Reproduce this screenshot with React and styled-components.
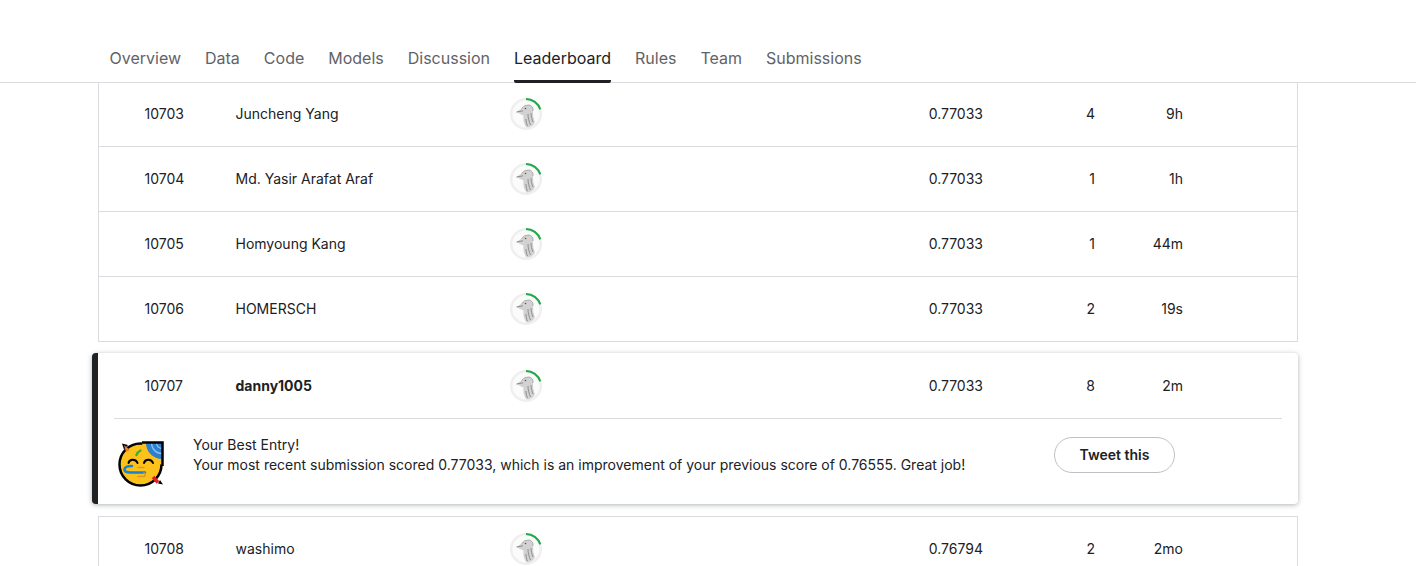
import styled, { createGlobalStyle } from "styled-components";

const rowsBefore = [
  { rank: 10703, name: "Juncheng Yang", score: "0.77033", entries: 4, last: "9h" },
  { rank: 10704, name: "Md. Yasir Arafat Araf", score: "0.77033", entries: 1, last: "1h" },
  { rank: 10705, name: "Homyoung Kang", score: "0.77033", entries: 1, last: "44m" },
  { rank: 10706, name: "HOMERSCH", score: "0.77033", entries: 2, last: "19s" },
];
const tabs = ["Overview", "Data", "Code", "Models", "Discussion", "Leaderboard", "Rules", "Team", "Submissions"];

export default function App() {
  return (
    <Page>
      <GlobalStyle />
      <TabBar>
        {tabs.map((t) => (
          <Tab key={t} $active={t === "Leaderboard"}>{t}</Tab>
        ))}
      </TabBar>
      <Board>
        <Group $first>
          {rowsBefore.map((r, i) => (
            <LeaderRow key={r.rank} row={r} first={i === 0} />
          ))}
        </Group>
        <BestCard>
          <LeaderRow row={{ rank: 10707, name: "danny1005", score: "0.77033", entries: 8, last: "2m" }} bold first={false} />
          <Divider />
          <Message>
            <PartyFace />
            <MessageText>
              Your Best Entry!
              <br />
              Your most recent submission scored 0.77033, which is an improvement of your previous score of 0.76555. Great job!
            </MessageText>
            <TweetButton>Tweet this</TweetButton>
          </Message>
        </BestCard>
        <Group>
          <LeaderRow row={{ rank: 10708, name: "washimo", score: "0.76794", entries: 2, last: "2mo" }} first={false} />
        </Group>
      </Board>
    </Page>
  );
}

function LeaderRow({ row, bold, first }) {
  return (
    <Row $first={first} $best={bold}>
      <Rank>{row.rank}</Rank>
      <Name $bold={bold}>{row.name}</Name>
      <Medal />
      <Num>{row.score}</Num>
      <Num>{row.entries}</Num>
      <Num>{row.last}</Num>
    </Row>
  );
}

function Medal() {
  return (
    <svg width="34" height="34" viewBox="0 0 34 34">
      <circle cx="17" cy="17" r="14.800" fill="#fbfbfb" stroke="#efefef" strokeWidth="2.500" />
      <path d="M17 2A15 15 0 0 1 31.300 12.400" fill="none" stroke="#20a84a" strokeWidth="2" />
      <path d="M7.500 15L12.500 11.500Q15.500 7.500 20 8Q24.500 9 24 14Q23.500 20 26 25.500Q23 30.500 17.500 30.500Q13.500 25 14.500 18.500Q11.500 17.500 7.500 15z" fill="#d2d2d2" />
      <path d="M7.500 15L14 13.800" fill="none" stroke="#777" strokeWidth="0.800" />
      <path d="M12.500 11.500Q15.500 7.500 20 8Q24.500 9 24 14" fill="none" stroke="#a0a0a0" strokeWidth="0.800" />
      <path d="M19 17c0 4 1 7.500 2.500 11M22 16c0 3 .8 6 2 9M17 22c0 2.500.5 5 1.500 7" fill="none" stroke="#8f8f8f" strokeWidth="1" />
      <circle cx="16.500" cy="11.500" r="0.800" fill="#555" />
    </svg>
  );
}

function PartyFace() {
  return (
    <FaceSvg width="48" height="48" viewBox="0 0 48 48">
      <circle cx="23.500" cy="25.500" r="21" fill="#fcc21b" stroke="#000" strokeWidth="2.500" />
      <path d="M25 3.500H45.500V26L27 20z" fill="#fcc21b" />
      <path d="M29 4H45V20A16 16 0 0 1 29 4z" fill="#2f7fd0" />
      <path d="M34.500 4A10.500 10.500 0 0 0 45 14.500M39.500 4A5.500 5.500 0 0 0 45 9.500" fill="none" stroke="#8cc4ee" strokeWidth="1.300" />
      <path d="M25 3.500H45.500V27" fill="none" stroke="#000" strokeWidth="2.500" />
      <path d="M5 4.500L11 6 7 10.500z" fill="#000" />
      <path d="M7 6L13 11 9 13z" fill="#f47b20" />
      <path d="M19.500 16c.5-2 2-3.500 4-4.500" fill="none" stroke="#3cb034" strokeWidth="2.400" strokeLinecap="round" />
      <path d="M11.500 24c1-4.500 7.500-4.500 9 0M27 24c1-4.500 7.500-4.500 9 0" fill="none" stroke="#000" strokeWidth="2" strokeLinecap="round" />
      <path d="M15 27c-4 0-7.500 1-7.500 3.500 0 2.500 3 3 6 3H28" fill="none" stroke="#1583d8" strokeWidth="2.600" strokeLinecap="round" />
      <path d="M27 28.500h-6M21 37.500h6M27 37.500c1.500-.8 1.500-2.500 0-3.500" fill="none" stroke="#d89b20" strokeWidth="1.600" strokeLinecap="round" />
      <path d="M36 38l5 5.500" fill="none" stroke="#e02020" strokeWidth="3.500" />
      <path d="M43 41l3 4.500-5-1z" fill="#000" />
    </FaceSvg>
  );
}

const GlobalStyle = createGlobalStyle`
  html, body {
    margin: 0;
    background: #ffffff;
    overflow: hidden;
  }
  body {
    font-family: Inter, "Liberation Sans", sans-serif;
    color: #202124;
  }
`;

const Page = styled.div`
  width: 1416px;
  height: 566px;
  overflow: hidden;
`;

const TabBar = styled.nav`
  height: 82px;
  display: flex;
  align-items: flex-end;
  gap: 24px;
  padding-left: 109.5px;
  border-bottom: 1px solid #dadce0;
`;

const Tab = styled.div`
  height: 37px;
  box-sizing: border-box;
  font-size: 16px;
  line-height: 24px;
  margin-bottom: -1px;
  color: ${(p) => (p.$active ? "#202124" : "#5f6368")};
  border-bottom: 3px solid ${(p) => (p.$active ? "#202124" : "transparent")};
  border-radius: 0 0 2px 2px;
`;

const Board = styled.main`
  width: 1200px;
  margin-left: 98px;
`;

const Group = styled.section`
  border: 1px solid #dadce0;
  border-top: ${(p) => (p.$first ? "none" : "1px solid #dadce0")};
  box-sizing: border-box;
  & > div + div {
    border-top: 1px solid #dadce0;
  }
`;

const Row = styled.div`
  display: grid;
  grid-template-columns: 85px 325px 34px 440px 112px 88px;
  align-items: center;
  height: ${(p) => (p.$first ? 62 : p.$best ? 65 : 64)}px;
  padding-bottom: ${(p) => (p.$first ? 1 : 0)}px;
  padding-left: ${(p) => (p.$best ? 1 : 0)}px;
  font-size: 14px;
  line-height: 20px;
`;

const Rank = styled.div`
  padding-left: 45.5px;
  white-space: nowrap;
`;

const Name = styled.div`
  padding-left: 51.5px;
  font-weight: ${(p) => (p.$bold ? 700 : 400)};
`;

const Num = styled.div`
  text-align: right;
`;

const BestCard = styled.section`
  position: relative;
  margin: 11px 0 12px -6px;
  width: 1206px;
  box-sizing: border-box;
  border-left: 6px solid #202124;
  border-radius: 4px;
  background: #ffffff;
  box-shadow: 0 1px 5px rgba(60, 64, 67, 0.4);
`;

const Divider = styled.hr`
  margin: 0 16px;
  border: none;
  border-top: 1px solid #dadce0;
`;

const Message = styled.div`
  height: 85px;
  display: flex;
  align-items: center;
  padding-left: 19px;
`;

const FaceSvg = styled.svg`
  flex: none;
  margin-top: 3px;
`;

const MessageText = styled.div`
  margin-left: 28px;
  width: 861px;
  font-size: 14px;
  line-height: 20px;
  margin-top: -14px;
`;

const TweetButton = styled.button`
  width: 121px;
  height: 36px;
  margin-top: -14px;
  border: 1px solid #bdc1c6;
  border-radius: 18px;
  background: #ffffff;
  color: #202124;
  font-family: inherit;
  font-size: 14px;
  font-weight: 600;
`;
